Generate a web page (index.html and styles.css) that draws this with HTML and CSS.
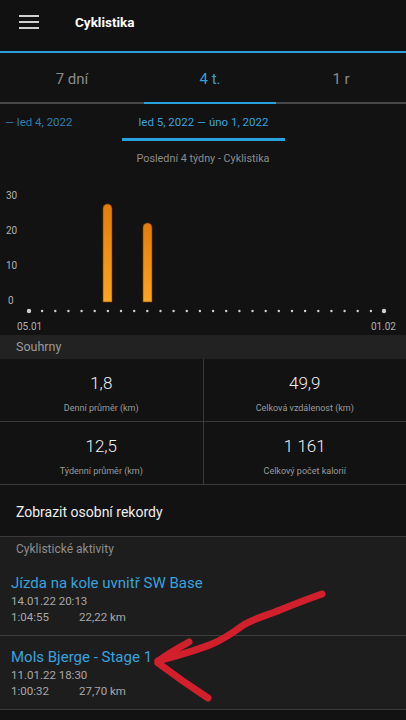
FILE: index.html
```html
<!DOCTYPE html>
<html lang="cs">
<head>
<meta charset="utf-8">
<title>Cyklistika</title>
<link rel="stylesheet" href="styles.css">
</head>
<body>
<div class="page">
  <header class="appbar">
    <svg class="menu" width="20" height="20" viewBox="0 0 20 20">
      <rect x="0" y="3" width="20" height="2" fill="#cfcfcf"/>
      <rect x="0" y="9" width="20" height="2" fill="#cfcfcf"/>
      <rect x="0" y="15" width="20" height="2" fill="#cfcfcf"/>
    </svg>
    <h1 class="title">Cyklistika</h1>
  </header>
  <div class="accent"></div>

  <nav class="tabs">
    <div class="tab">7 dní</div>
    <div class="tab active">4 t.</div>
    <div class="tab">1 r</div>
  </nav>

  <div class="ranges">
    <div class="range prev">— led 4, 2022</div>
    <div class="range current">led 5, 2022 — úno 1, 2022</div>
  </div>

  <div class="chart-title">Poslední 4 týdny - Cyklistika</div>

  <svg class="chart" width="406" height="167" viewBox="0 0 406 167">
    <defs>
      <linearGradient id="bar" x1="0" y1="0" x2="0" y2="1">
        <stop offset="0" stop-color="#e47c0a"/>
        <stop offset="1" stop-color="#fca521"/>
      </linearGradient>
    </defs>
    <g class="ylabels">
      <text x="6" y="31">30</text>
      <text x="6" y="66">20</text>
      <text x="6" y="101">10</text>
      <text x="8" y="136">0</text>
    </g>
    <path d="M103,134 V40.5 A4.5,4.5 0 0 1 112,40.5 V134 Z" fill="url(#bar)" stroke="#7a3e00" stroke-width="0.6"/>
    <path d="M143,134 V59.5 A4.5,4.5 0 0 1 152,59.5 V134 Z" fill="url(#bar)" stroke="#7a3e00" stroke-width="0.6"/>
    <g class="dots" fill="#cfcfcf">
      <circle cx="29" cy="143" r="2.2"/>
      <circle cx="42.1" cy="143" r="1.2"/>
      <circle cx="55.3" cy="143" r="1.2"/>
      <circle cx="68.4" cy="143" r="1.2"/>
      <circle cx="81.6" cy="143" r="1.2"/>
      <circle cx="94.7" cy="143" r="1.2"/>
      <circle cx="107.9" cy="143" r="1.2"/>
      <circle cx="121" cy="143" r="1.2"/>
      <circle cx="134.2" cy="143" r="1.2"/>
      <circle cx="147.3" cy="143" r="1.2"/>
      <circle cx="160.5" cy="143" r="1.2"/>
      <circle cx="173.6" cy="143" r="1.2"/>
      <circle cx="186.8" cy="143" r="1.2"/>
      <circle cx="199.9" cy="143" r="1.2"/>
      <circle cx="213.1" cy="143" r="1.2"/>
      <circle cx="226.2" cy="143" r="1.2"/>
      <circle cx="239.4" cy="143" r="1.2"/>
      <circle cx="252.5" cy="143" r="1.2"/>
      <circle cx="265.7" cy="143" r="1.2"/>
      <circle cx="278.8" cy="143" r="1.2"/>
      <circle cx="292" cy="143" r="1.2"/>
      <circle cx="305.1" cy="143" r="1.2"/>
      <circle cx="318.3" cy="143" r="1.2"/>
      <circle cx="331.4" cy="143" r="1.2"/>
      <circle cx="344.6" cy="143" r="1.2"/>
      <circle cx="357.7" cy="143" r="1.2"/>
      <circle cx="370.9" cy="143" r="1.2"/>
      <circle cx="384" cy="143" r="2.2"/>
    </g>
    <g class="xlabels">
      <text x="17" y="162">05.01</text>
      <text x="396" y="162" text-anchor="end">01.02</text>
    </g>
  </svg>

  <div class="section-head">Souhrny</div>
  <div class="stats">
    <div class="stat"><div class="value">1,8</div><div class="label">Denní průměr (km)</div></div>
    <div class="stat"><div class="value">49,9</div><div class="label">Celková vzdálenost (km)</div></div>
    <div class="stat"><div class="value">12,5</div><div class="label">Týdenní průměr (km)</div></div>
    <div class="stat"><div class="value">1 161</div><div class="label">Celkový počet kalorií</div></div>
  </div>

  <div class="records">Zobrazit osobní rekordy</div>

  <section class="activities">
    <div class="act-head">Cyklistické aktivity</div>
    <div class="activity">
      <div class="act-title">Jízda na kole uvnitř SW Base</div>
      <div class="act-meta">14.01.22 20:13</div>
      <div class="act-meta"><span class="dur">1:04:55</span><span>22,22 km</span></div>
    </div>
    <div class="activity">
      <div class="act-title">Mols Bjerge - Stage 1</div>
      <div class="act-meta">11.01.22 18:30</div>
      <div class="act-meta"><span class="dur">1:00:32</span><span>27,70 km</span></div>
    </div>
  </section>

  <svg class="annotation" width="406" height="720" viewBox="0 0 406 720">
    <g fill="none" stroke="#d21f2c" stroke-width="7" stroke-linecap="round" stroke-linejoin="round">
      <path d="M322,594 C305,600 292,605 280,610 C268,615 252,619 242,626 C234,632 226,638 212,644 C195,651 175,656 158,661"/>
      <path d="M189,642 C178,648 168,654 158,661"/>
      <path d="M158,663 C170,672 185,683 208,698"/>
    </g>
  </svg>
</div>
</body>
</html>
```

FILE: styles.css
```css
* { box-sizing: border-box; }
html, body { margin: 0; padding: 0; }
body {
  background: #121212;
  font-family: Roboto, "Noto Sans", "Liberation Sans", sans-serif;
  color: #e8e8e8;
}
.page {
  position: relative;
  width: 406px;
  height: 720px;
  overflow: hidden;
  background: #121212;
}
.appbar {
  height: 51px;
  display: flex;
  align-items: flex-start;
  padding: 12px 0 0 19px;
  background: #111111;
}
.menu { display: block; }
.title {
  margin: 0 0 0 36px;
  font-size: 13.5px;
  line-height: 20px;
  font-weight: 700;
  color: #ffffff;
}
.accent { height: 2px; background: #2a9fdb; }

.tabs {
  display: grid;
  grid-template-columns: 144px 132px 130px;
}
.tab {
  padding-top: 3px;
  line-height: 46px;
  text-align: center;
  font-size: 15px;
  color: #8a8a8a;
  border-bottom: 2px solid #474747;
}
.tab.active {
  color: #3a9fd6;
  border-bottom-color: #2aa2e0;
}

.ranges {
  display: flex;
  height: 37px;
}
.range {
  padding-top: 3px;
  line-height: 31px;
  font-size: 11.5px;
  white-space: nowrap;
}
.range.prev {
  width: 122px;
  padding-left: 5px;
  color: #2c7fae;
}
.range.current {
  width: 163px;
  text-align: center;
  color: #3aa2dc;
  border-bottom: 3px solid #2aa2e0;
}

.chart-title {
  margin-top: 9px;
  line-height: 18px;
  text-align: center;
  font-size: 10.8px;
  color: #8c8c8c;
}
.chart { display: block; }
.chart text {
  font-family: Roboto, "Noto Sans", sans-serif;
  font-size: 10px;
  fill: #b0b0b0;
}

.section-head {
  height: 24px;
  line-height: 24px;
  padding-left: 16px;
  background: #222222;
  font-size: 12.5px;
  color: #9a9a9a;
}

.stats {
  display: grid;
  grid-template-columns: 1fr 1fr;
  gap: 1px;
  background: #3a3a3a;
  border-bottom: 1px solid #3a3a3a;
}
.stat {
  height: 62px;
  padding-top: 13px;
  background: #121212;
  text-align: center;
}
.value {
  font-size: 17px;
  line-height: 22px;
  font-weight: 300;
  color: #f0f0f0;
}
.label {
  margin-top: 7px;
  font-size: 9px;
  line-height: 14px;
  color: #9a9a9a;
}

.records {
  height: 52px;
  padding: 3px 0 0 16px;
  line-height: 48px;
  font-size: 14px;
  color: #eeeeee;
  border-bottom: 1px solid #3a3a3a;
}

.activities {
  background: #1d1d1d;
}
.act-head {
  height: 25px;
  line-height: 25px;
  padding-left: 16px;
  font-size: 12px;
  color: #8e8e8e;
}
.activity {
  padding: 11px 0 10px 11px;
  border-bottom: 1px solid #3c3c3c;
}
.act-title {
  font-size: 15px;
  line-height: 20px;
  color: #38a3dc;
}
.act-meta {
  font-size: 11.5px;
  line-height: 16px;
  color: #a8a8a8;
  display: flex;
}
.dur { width: 68px; }

.annotation {
  position: absolute;
  left: 0;
  top: 0;
  pointer-events: none;
}
```
